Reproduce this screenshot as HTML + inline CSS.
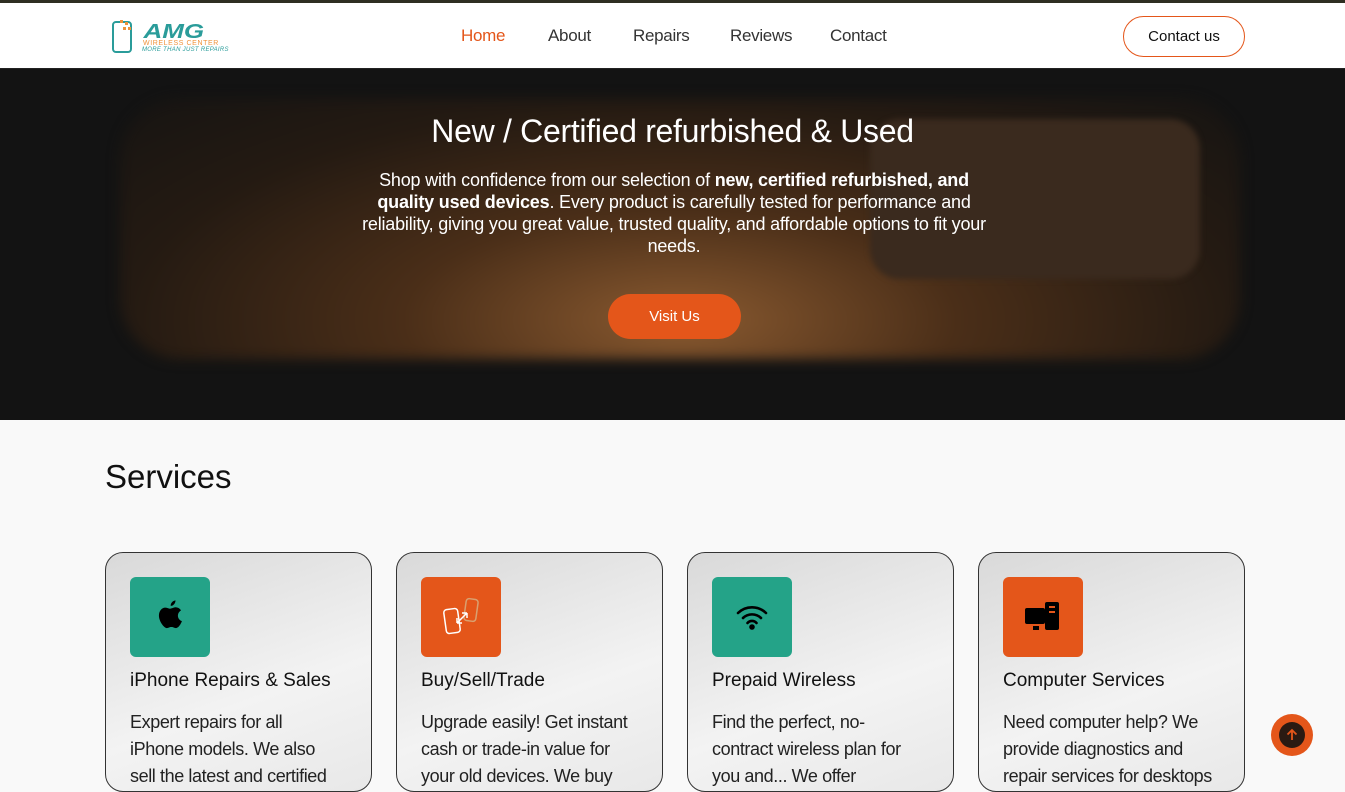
<!DOCTYPE html>
<html><head><meta charset="utf-8"><style>
*{margin:0;padding:0;box-sizing:border-box}
body{width:1345px;height:772px;overflow:hidden;background:#f9f9f9;font-family:"Liberation Sans",sans-serif;position:relative}
.top{position:absolute;top:0;left:0;width:1345px;height:3px;background:#2e2e22}
header{position:absolute;top:3px;left:0;width:1345px;height:66px;background:#fff;border-bottom:1px solid #222}
nav a{position:absolute;top:23px;font-size:17px;color:#333;text-decoration:none;letter-spacing:-.3px}
.cta{position:absolute;left:1123px;top:13px;width:122px;height:41px;border:1px solid #e4561a;border-radius:21px;font-size:15px;color:#111;text-align:center;line-height:39px}
.hero{position:absolute;top:69px;left:0;width:1345px;height:351px;background:#131313;overflow:hidden}
.phone{position:absolute;left:120px;top:30px;width:1120px;height:260px;border-radius:60px;background:radial-gradient(ellipse at 50% 85%,#8a5a30 0%,#4a2e18 35%,#241a12 70%,#161412 100%);filter:blur(6px)}
.cam{position:absolute;left:870px;top:50px;width:330px;height:160px;border-radius:30px;background:#3a2a1e;filter:blur(3px)}
.hero h1{position:absolute;top:44px;width:100%;text-align:center;color:#fff;font-size:32px;font-weight:500;letter-spacing:-.3px}
.hero p{position:absolute;top:100px;left:300px;width:748px;text-align:center;color:#fff;font-size:18px;line-height:22px;letter-spacing:-.2px;white-space:nowrap}
.btn{position:absolute;left:608px;top:225px;width:133px;height:45px;border-radius:23px;background:#e4561a;color:#fff;font-size:15px;text-align:center;line-height:45px}
h2{position:absolute;left:105px;top:458px;font-size:33px;font-weight:500;color:#111}
.card{position:absolute;top:552px;width:267px;height:240px;border:1px solid #333;border-radius:18px;background:linear-gradient(160deg,#d9d9d9,#f3f3f3 60%,#e8e8e8)}
.ic{position:absolute;left:24px;top:24px;width:80px;height:80px;border-radius:6px;display:flex;align-items:center;justify-content:center}
.card h3{position:absolute;left:24px;top:117px;font-size:19px;font-weight:500;color:#111}
.card p{position:absolute;left:24px;top:156px;width:240px;font-size:18px;line-height:27px;color:#222;letter-spacing:-.4px;white-space:nowrap}
.up{position:absolute;left:1271px;top:714px;width:42px;height:42px;border-radius:50%;background:#e4561a;display:flex;align-items:center;justify-content:center}
.up div{width:26px;height:26px;border-radius:50%;background:#2a1a12;display:flex;align-items:center;justify-content:center}
</style></head><body>
<div class="top"></div>
<header>
<svg style="position:absolute;left:111px;top:15px" width="118" height="36" viewBox="0 0 118 36">
<rect x="2" y="4" width="18" height="30" rx="3" fill="none" stroke="#2a9c9a" stroke-width="2"/>
<rect x="9" y="2" width="3" height="3" fill="#f0923a"/><rect x="14" y="4" width="3" height="3" fill="#f0923a"/><rect x="12" y="9" width="3" height="3" fill="#f0923a"/><rect x="17" y="9" width="3" height="3" fill="#f0923a"/>
<text x="32" y="20" font-family="Liberation Sans" font-weight="bold" font-style="italic" font-size="20" fill="#2a9c9a" transform="scale(1.3 1) translate(-7 0)">AMG</text>
<text x="32" y="27" font-family="Liberation Sans" font-size="7" fill="#f0923a" letter-spacing=".6">WIRELESS CENTER</text>
<text x="31" y="33" font-family="Liberation Sans" font-style="italic" font-size="6" fill="#2a9c9a" letter-spacing=".3">MORE THAN JUST REPAIRS</text>
</svg>
<nav><a style="left:461px;color:#e4561a">Home</a><a style="left:548px">About</a><a style="left:633px">Repairs</a><a style="left:730px">Reviews</a><a style="left:830px">Contact</a></nav>
<div class="cta">Contact us</div>
</header>
<div class="hero">
<div class="phone"></div><div class="cam"></div>
<h1>New / Certified refurbished &amp; Used</h1>
<p>Shop with confidence from our selection of <b>new, certified refurbished, and</b><br><b>quality used devices</b>. Every product is carefully tested for performance and<br>reliability, giving you great value, trusted quality, and affordable options to fit your<br>needs.</p>
<div class="btn">Visit Us</div>
</div>
<h2>Services</h2>
<div class="card" style="left:105px"><div class="ic" style="background:#24a388"><svg width="34" height="36" viewBox="0 0 24 26"><path d="M16 1c0 2-1.5 4-3.5 4C12.4 3 14 1.2 16 1zM12 7c1.5 0 2.5-1 4-1 1.5 0 3 .8 4 2.2-3.4 2-2.8 6.6.6 7.8-.8 2.3-2.6 5-4.3 5-1.3 0-1.8-.8-3.3-.8s-2 .8-3.3.8C7.6 21 4 16 4 12c0-3.5 2.2-5.8 4.5-5.8C9.8 6.2 11 7 12 7z" fill="#000"/></svg></div><h3>iPhone Repairs &amp; Sales</h3><p>Expert repairs for all<br>iPhone models. We also<br>sell the latest and certified</p></div>
<div class="card" style="left:396px"><div class="ic" style="background:#e4561a"><svg width="44" height="44" viewBox="0 0 44 44" fill="none" stroke="#fff" stroke-width="1.5"><rect x="6" y="14" width="14" height="24" rx="3" transform="rotate(-8 13 26)"/><rect x="26" y="4" width="12" height="22" rx="3" stroke="#d9a070" transform="rotate(8 32 15)"/><path d="M18 28l10-10M18 28v-5M18 28h5M28 18h-5M28 18v5"/></svg></div><h3>Buy/Sell/Trade</h3><p>Upgrade easily! Get instant<br>cash or trade-in value for<br>your old devices. We buy</p></div>
<div class="card" style="left:687px"><div class="ic" style="background:#24a388"><svg width="34" height="28" viewBox="0 0 34 28" fill="none" stroke="#000" stroke-width="2.6" stroke-linecap="round"><path d="M3 10a20 20 0 0 1 28 0M8 15a13 13 0 0 1 18 0M12.5 20a6 6 0 0 1 9 0"/><circle cx="17" cy="24" r="1.5" fill="#000"/></svg></div><h3>Prepaid Wireless</h3><p>Find the perfect, no-<br>contract wireless plan for<br>you and... We offer</p></div>
<div class="card" style="left:978px"><div class="ic" style="background:#e4561a"><svg width="40" height="34" viewBox="0 0 40 34"><rect x="2" y="8" width="20" height="16" rx="2" fill="#000"/><rect x="10" y="26" width="6" height="4" fill="#000"/><rect x="22" y="2" width="14" height="28" rx="2" fill="#000"/><rect x="26" y="6" width="6" height="2" fill="#e4561a"/><rect x="26" y="11" width="6" height="2" fill="#e4561a"/></svg></div><h3>Computer Services</h3><p>Need computer help? We<br>provide diagnostics and<br>repair services for desktops</p></div>
<div class="up"><div><svg width="14" height="14" viewBox="0 0 14 14" fill="none" stroke="#e4561a" stroke-width="1.8"><path d="M7 12V2M2.5 6.5L7 2l4.5 4.5"/></svg></div></div>
</body></html>
